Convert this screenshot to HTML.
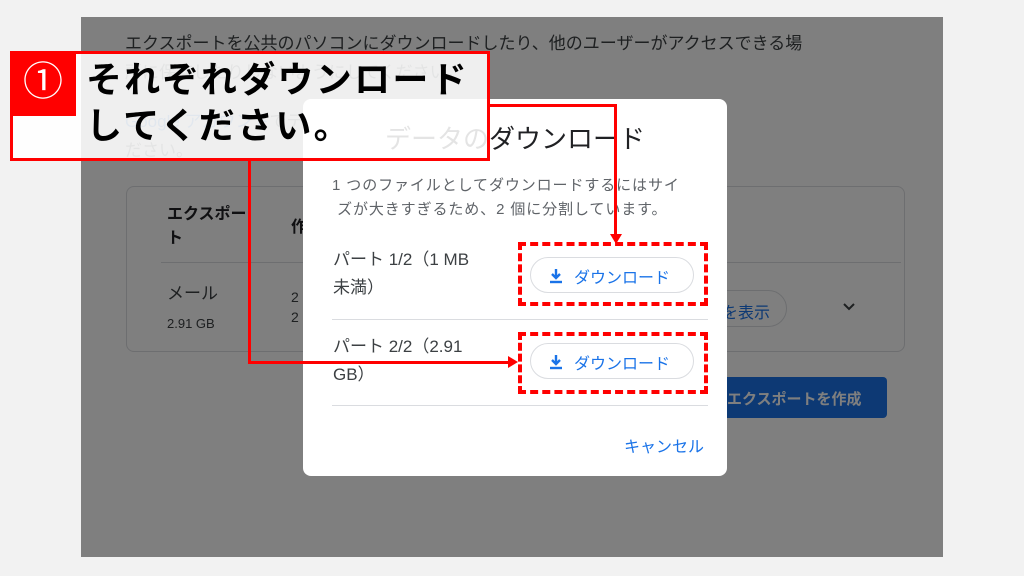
<!DOCTYPE html>
<html><head><meta charset="utf-8"><style>
*{margin:0;padding:0;box-sizing:border-box}
body{width:1024px;height:576px;background:#f2f2f2;position:relative;overflow:hidden;font-family:"Liberation Sans","Noto Sans CJK JP",sans-serif}
.a{position:absolute;white-space:nowrap}
#pg{position:absolute;left:81px;top:17px;width:862px;height:540px;background:#fff;overflow:hidden}
#ov{position:absolute;left:81px;top:17px;width:862px;height:540px;background:rgba(0,0,0,.5)}
.t{font-size:17px;color:#3c4043}
#dlg{position:absolute;left:303px;top:99px;width:424px;height:377px;background:#fff;border-radius:8px}
.btn{position:absolute;left:227px;width:164px;height:36px;border:1px solid #dadce0;border-radius:18px;color:#1a73e8;font-size:16px}
.div{position:absolute;left:29px;width:376px;height:1px;background:#dadce0}
.r{position:absolute;background:#f00}
.dash{position:absolute;border:4px dashed #f00}
</style></head><body>
<div id="pg">
<div class="a t" style="left:44px;top:12px">エクスポートを公共のパソコンにダウンロードしたり、他のユーザーがアクセスできる場</div>
<div class="a t" style="left:44px;top:41px">所に保存したりしないようにしてください。</div>
<div class="a t" style="left:44px;top:90px"><span style="color:#1a73e8">Google アカウント</span>でデータを管理する他の方法をご確認く</div>
<div class="a t" style="left:44px;top:119px">ださい。</div>
<div class="a" style="left:45px;top:169px;width:779px;height:166px;border:1px solid #dadce0;border-radius:8px"></div>
<div class="a" style="left:86px;top:186px;font-size:16px;font-weight:bold;color:#202124;line-height:24px;white-space:normal;width:80px">エクスポート</div>
<div class="a" style="left:210px;top:196px;font-size:16px;font-weight:bold;color:#202124">作成日</div>
<div class="a" style="left:80px;top:245px;width:740px;height:1px;background:#dadce0"></div>
<div class="a" style="left:86px;top:262px;font-size:17px;color:#3c4043">メール</div>
<div class="a" style="left:86px;top:299px;font-size:13px;color:#3c4043">2.91 GB</div>
<div class="a" style="left:210px;top:270px;font-size:14px;color:#3c4043;line-height:20px">2<br>2</div>
<div class="a" style="left:600px;top:273px;width:106px;height:37px;border:1px solid #dadce0;border-radius:19px;color:#1a73e8;font-size:16px;padding:8px 0 0 40px">を表示</div>
<svg class="a" style="left:761px;top:285px" width="14" height="10" viewBox="0 0 14 10"><path d="M2 2l5 5 5-5" fill="none" stroke="#3c4043" stroke-width="2"/></svg>
<div class="a" style="left:620px;top:360px;width:186px;height:41px;background:#1a73e8;border-radius:4px;color:#fff;font-size:15px;font-weight:bold;padding:11px 0 0 26px">エクスポートを作成</div>
</div>
<div id="ov"></div>
<div id="dlg">
<div class="a" style="left:82px;top:20px;font-size:26px;color:#202124">データのダウンロード</div>
<div class="a" style="left:29px;top:75px;font-size:15px;letter-spacing:0.9px;color:#5f6368;line-height:24px">1 つのファイルとしてダウンロードするにはサイ<br>&nbsp;ズが大きすぎるため、2 個に分割しています。</div>
<div class="a" style="left:30px;top:147px;font-size:17px;color:#3c4043;line-height:28px">パート 1/2（1 MB<br>未満）</div>
<div class="btn" style="top:158px"><svg class="a" style="left:18px;top:10px" width="14" height="16" viewBox="0 0 14 16"><path d="M7 1v9M3 6l4 4 4-4" fill="none" stroke="#1a73e8" stroke-width="2.4"/><path d="M1 14h12" stroke="#1a73e8" stroke-width="2.4"/></svg><span class="a" style="left:43px;top:6px">ダウンロード</span></div>
<div class="div" style="top:220px"></div>
<div class="a" style="left:30px;top:234px;font-size:17px;color:#3c4043;line-height:28px">パート 2/2（2.91<br>GB）</div>
<div class="btn" style="top:244px"><svg class="a" style="left:18px;top:10px" width="14" height="16" viewBox="0 0 14 16"><path d="M7 1v9M3 6l4 4 4-4" fill="none" stroke="#1a73e8" stroke-width="2.4"/><path d="M1 14h12" stroke="#1a73e8" stroke-width="2.4"/></svg><span class="a" style="left:43px;top:6px">ダウンロード</span></div>
<div class="div" style="top:306px"></div>
<div class="a" style="left:321px;top:334px;font-size:16px;color:#1a73e8">キャンセル</div>
</div>
<!-- callout -->
<div class="a" style="left:10px;top:51px;width:480px;height:110px;border:3px solid #f00;background:rgba(255,255,255,.88)"></div>
<div class="a" style="left:10px;top:51px;width:66px;height:65px;background:#f00;color:#fff;font-size:40px;text-align:center;line-height:62px">①</div>
<div class="a" style="left:86px;top:57px;font-size:36px;font-weight:bold;color:#000;line-height:46px;letter-spacing:2.3px">それぞれダウンロード<br>してください。</div>
<div class="r" style="left:248px;top:161px;width:3px;height:203px"></div>
<div class="r" style="left:248px;top:361px;width:262px;height:3px"></div>
<div class="a" style="left:508px;top:356px;width:0;height:0;border-left:10px solid #f00;border-top:6px solid transparent;border-bottom:6px solid transparent"></div>
<div class="r" style="left:490px;top:104px;width:127px;height:3px"></div>
<div class="r" style="left:614px;top:104px;width:3px;height:132px"></div>
<div class="a" style="left:610px;top:234px;width:0;height:0;border-top:10px solid #f00;border-left:6px solid transparent;border-right:6px solid transparent"></div>
<div class="dash" style="left:518px;top:242px;width:190px;height:64px"></div>
<div class="dash" style="left:518px;top:332px;width:190px;height:62px"></div>
</body></html>
